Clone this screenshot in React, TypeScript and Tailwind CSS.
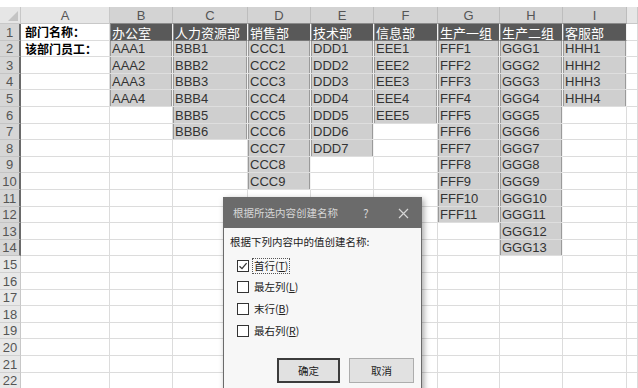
import React from 'react'

const colW = ['w-[21px]', 'w-[89px]', 'w-[63px]', 'w-[75px]', 'w-[63px]', 'w-[63px]', 'w-[64px]', 'w-[62px]', 'w-[63px]', 'w-[64px]', 'w-[11px]']
const letters = ['', 'A', 'B', 'C', 'D', 'E', 'F', 'G', 'H', 'I', '']

const depts = [
  { name: '办公室', code: 'AAA', n: 4 },
  { name: '人力资源部', code: 'BBB', n: 6 },
  { name: '销售部', code: 'CCC', n: 9 },
  { name: '技术部', code: 'DDD', n: 7 },
  { name: '信息部', code: 'EEE', n: 5 },
  { name: '生产一组', code: 'FFF', n: 11 },
  { name: '生产二组', code: 'GGG', n: 13 },
  { name: '客服部', code: 'HHH', n: 4 },
]

const font = "font-['Liberation_Sans','Noto_Sans_CJK_SC',sans-serif]"
const cjk = "font-['Noto_Sans_CJK_SC','Liberation_Sans',sans-serif]"

function Cell({ row, col }: { row: number; col: number }) {
  // col 1 = A, 2..9 = B..I, 10 = J
  if (col === 1) {
    const text = row === 1 ? '部门名称：' : row === 2 ? '该部门员工：' : ''
    return (
      <div className={`${colW[col]} shrink-0 border-r border-b border-[#dcdcdc] pl-[4px] text-[12px] flex items-center whitespace-nowrap font-bold text-black ${cjk}`}>
        <span className="leading-[12px] block">{text}</span>
      </div>
    )
  }
  const d = col >= 2 && col <= 9 ? depts[col - 2] : null
  if (d && row === 1) {
    return (
      <div className={`${colW[col]} shrink-0 border-r border-b border-r-[#f2f2f2] border-b-[#777] bg-[#595959] text-white pl-[2px] text-[13px] flex items-center whitespace-nowrap shadow-[inset_1px_0_0_#8a8a8a] ${cjk}`}>
        <span className="leading-[13px] block">{d.name}</span>
      </div>
    )
  }
  if (d && row - 1 <= d.n) {
    return (
      <div className={`${colW[col]} shrink-0 border-r border-b border-r-[#f2f2f2] border-b-[#dedede] bg-[#cfcfcf] text-[#333] pl-[2px] text-[13px] leading-none flex items-center shadow-[inset_1px_0_0_#9a9a9a,inset_-1px_0_0_#9a9a9a] ${font}`}>
        {d.code}
        {row - 1}
      </div>
    )
  }
  return <div className={`${colW[col]} shrink-0 border-r border-b border-[#dcdcdc]`} />
}

function Check({ checked, label, hot, focus }: { checked?: boolean; label: string; hot: string; focus?: boolean }) {
  return (
    <div className="flex items-center h-[21.6px]">
      <div className="w-[12px] h-[12px] border border-[#333] bg-white flex items-center justify-center">
        {checked && (
          <svg width="10" height="10" viewBox="0 0 10 10">
            <path d="M1.5 5.2 L4 7.6 L8.6 2.2" fill="none" stroke="#333" strokeWidth="1.3" />
          </svg>
        )}
      </div>
      <span className={`ml-[3px] px-[1px] leading-[14px] ${focus ? 'border border-dotted border-[#555]' : 'border border-transparent'}`}>
        {label}(<span className="underline">{hot}</span>)
      </span>
    </div>
  )
}

export default function App() {
  const rows = Array.from({ length: 22 }, (_, i) => i + 1)
  return (
    <div className={`relative w-[638px] h-[388px] overflow-hidden bg-white pt-[7px] ${font}`}>
      {/* column headers */}
      <div className="flex h-[17px]">
        {letters.map((l, c) => (
          <div
            key={c}
            className={`${colW[c]} shrink-0 border-r border-b flex items-center justify-center text-[13px] leading-none text-[#555] ${
              c >= 2 && c <= 9 ? 'bg-[#d3d3d3] border-r-[#bdbdbd] border-b-[#8a8a8a]' : 'bg-[#e6e6e6] border-[#c8c8c8]'
            } ${c === 0 ? 'relative' : ''}`}
          >
            {c === 0 ? (
              <svg className="absolute right-[2px] bottom-[2px]" width="10" height="10" viewBox="0 0 10 10">
                <path d="M10 0 L10 10 L0 10 Z" fill="#c4c4c4" />
              </svg>
            ) : (
              l
            )}
          </div>
        ))}
      </div>

      {rows.map((r) => (
        <div key={r} className={`flex ${r % 5 === 2 || r % 5 === 4 ? 'h-[16px]' : 'h-[17px]'}`}>
          <div
            className={`${colW[0]} shrink-0 border-b flex items-center justify-center text-[13px] leading-none text-[#555] ${
              r <= 14 ? 'bg-[#d6d6d6] border-b-[#c4c4c4] border-r-2 border-r-[#6a6a6a]' : 'bg-[#e8e8e8] border-b-[#d0d0d0] border-r border-r-[#c8c8c8]'
            }`}
          >
            {r}
          </div>
          {Array.from({ length: 10 }, (_, i) => (
            <Cell key={i} row={r} col={i + 1} />
          ))}
        </div>
      ))}

      {/* dialog */}
      <div className={`absolute left-[223px] top-[197px] w-[199px] h-[200px] bg-[#f7f7f7] border border-[#6b6b6b] shadow-[2px_2px_6px_rgba(0,0,0,0.35)] text-[10.5px] text-[#222] ${cjk}`}>
        <div className="h-[30px] bg-[#6b6b6b] flex items-center text-[#d6d6d6] text-[10.5px]">
          <span className="pl-[9px]">根据所选内容创建名称</span>
          <span className="ml-[25px] text-[12px]">?</span>
          <svg className="ml-[29px]" width="11" height="11" viewBox="0 0 11 11">
            <path d="M1 1 L10 10 M10 1 L1 10" stroke="#d6d6d6" strokeWidth="1.2" />
          </svg>
        </div>
        <div className="pl-[6px] pt-[7px]">
          <div className="leading-[14px]">根据下列内容中的值创建名称:</div>
          <div className="pl-[7px] mt-[6px]">
            <Check checked label="首行" hot="T" focus />
            <Check label="最左列" hot="L" />
            <Check label="末行" hot="B" />
            <Check label="最右列" hot="R" />
          </div>
          <div className="flex gap-[9px] pl-[47px] mt-[17px]">
            <div className="w-[63px] h-[25px] border-2 border-[#3c3c3c] bg-[#e1e1e1] flex items-center justify-center">确定</div>
            <div className="w-[65px] h-[25px] border border-[#adadad] bg-[#e1e1e1] flex items-center justify-center">取消</div>
          </div>
        </div>
      </div>
    </div>
  )
}
